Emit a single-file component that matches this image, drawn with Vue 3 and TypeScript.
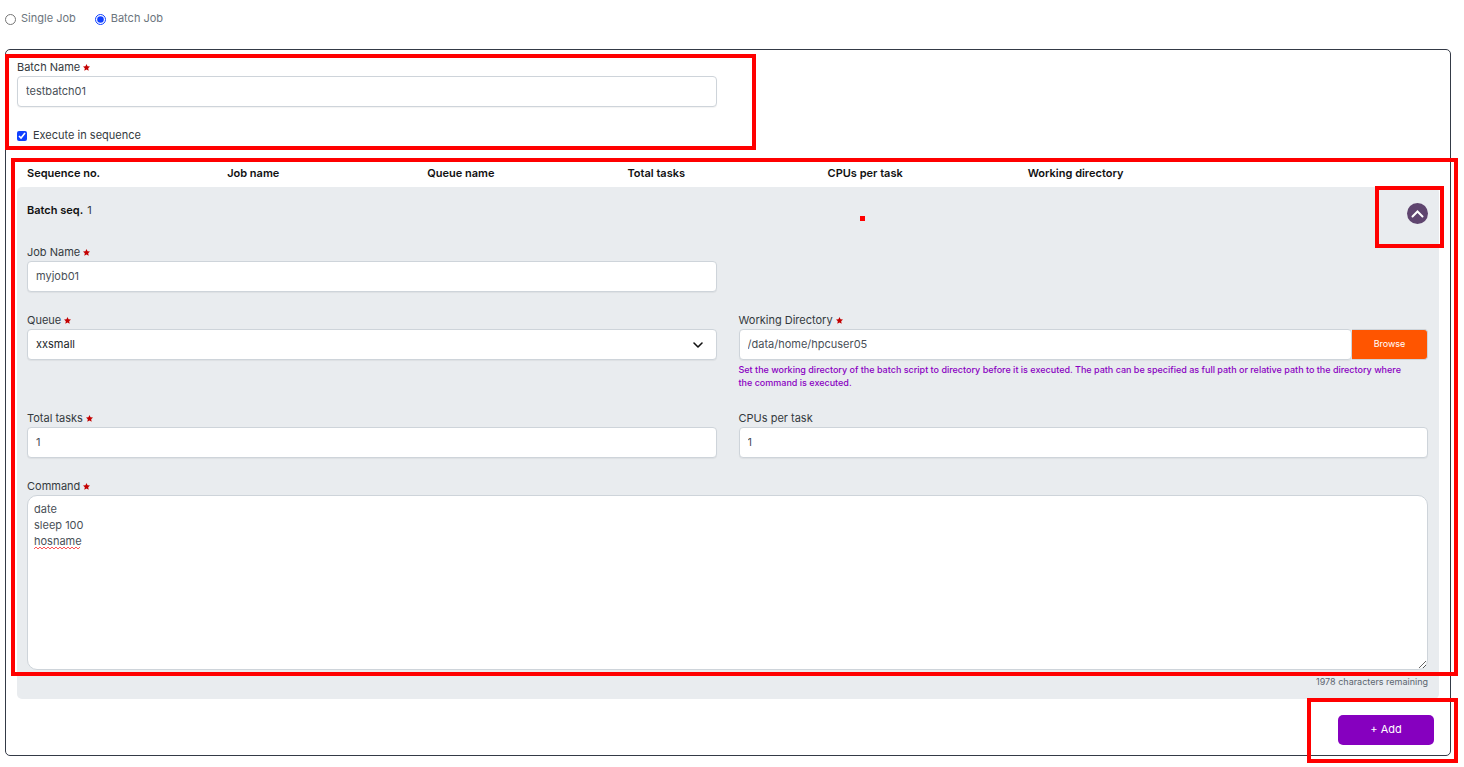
<script setup lang="ts">
import { computed, ref } from 'vue'

const mode = ref<'single' | 'batch'>('batch')
const batchName = ref('testbatch01')
const inSequence = ref(true)
const columns: string[] = ['Sequence no.', 'Job name', 'Queue name', 'Total tasks', 'CPUs per task', 'Working directory', '']
const queues: string[] = ['xxsmall', 'small', 'medium', 'large']

const jobName = ref('myjob01')
const queue = ref('xxsmall')
const directory = ref('/data/home/hpcuser05')
const totalTasks = ref('1')
const cpus = ref('1')
const command = ref('date\nsleep 100\nhosname')
const expanded = ref(true)

const limit = 2000
const remaining = computed(() => limit - command.value.length)
</script>

<template>
  <main class="page">
    <svg class="defs" aria-hidden="true">
      <symbol id="star" viewBox="0 0 10 10">
        <path d="M5 0l1.500 3.300 3.500.4-2.600 2.400.7 3.600L5 7.900 1.900 9.700l.7-3.600L0 3.700l3.500-.4z" />
      </symbol>
    </svg>

    <div class="modes">
      <label><input v-model="mode" type="radio" name="mode" value="single" />Single Job</label>
      <label><input v-model="mode" type="radio" name="mode" value="batch" />Batch Job</label>
    </div>

    <form class="card" @submit.prevent>
      <div class="columns">
        <div class="field">
          <label for="batch-name">Batch Name <svg class="star"><use href="#star" /></svg></label>
          <input id="batch-name" v-model="batchName" class="control" type="text" />
        </div>
      </div>
      <label class="check"><input v-model="inSequence" type="checkbox" />Execute in sequence</label>

      <div class="headings">
        <table>
          <thead>
            <tr><th v-for="c in columns" :key="c" scope="col">{{ c }}</th></tr>
          </thead>
        </table>
      </div>

      <section class="panel">
        <header class="panel-head">
          <p><b>Batch seq.</b>1</p>
          <button class="toggle" type="button" aria-label="Collapse" :aria-expanded="expanded" @click="expanded = !expanded">
            <svg viewBox="0 0 21 21"><path d="M5.500 13.500l5-5 5 5" /></svg>
          </button>
          <span class="mark mark-toggle"></span>
        </header>

        <div v-show="expanded">
          <div class="columns">
            <div class="field">
              <label for="job-name">Job Name <svg class="star"><use href="#star" /></svg></label>
              <input id="job-name" v-model="jobName" class="control" type="text" />
            </div>
          </div>
          <div class="columns">
            <div class="field">
              <label for="queue">Queue <svg class="star"><use href="#star" /></svg></label>
              <div class="select">
                <select id="queue" v-model="queue" class="control">
                  <option v-for="q in queues" :key="q">{{ q }}</option>
                </select>
                <svg class="chevron" viewBox="0 0 12 12"><path d="M2 4l4 4 4-4" /></svg>
              </div>
            </div>
            <div class="field">
              <label for="directory">Working Directory <svg class="star"><use href="#star" /></svg></label>
              <div class="group">
                <input id="directory" v-model="directory" class="control" type="text" />
                <button class="browse" type="button">Browse</button>
              </div>
              <p class="help">Set the working directory of the batch script to directory before it is executed. The path can be specified as full path or relative path to the directory where the command is executed.</p>
            </div>
          </div>
          <div class="columns">
            <div class="field">
              <label for="tasks">Total tasks <svg class="star"><use href="#star" /></svg></label>
              <input id="tasks" v-model="totalTasks" class="control" type="text" />
            </div>
            <div class="field">
              <label for="cpus">CPUs per task</label>
              <input id="cpus" v-model="cpus" class="control" type="text" />
            </div>
          </div>
          <div class="field command">
            <label for="command">Command <svg class="star"><use href="#star" /></svg></label>
            <textarea id="command" v-model="command" spellcheck="false"></textarea>
            <svg class="squiggle" viewBox="0 0 46 4"><path d="M0 3l2-2 2 2 2-2 2 2 2-2 2 2 2-2 2 2 2-2 2 2 2-2 2 2 2-2 2 2 2-2 2 2 2-2 2 2 2-2 2 2 2-2 2 2 2-2" /></svg>
          </div>
          <p class="counter">{{ remaining }} characters remaining</p>
        </div>
        <span class="mark mark-panel"></span>
        <span class="dot"></span>
      </section>

      <footer class="actions">
        <button class="add" type="button">+ Add</button>
        <span class="mark mark-add"></span>
      </footer>
      <span class="mark mark-batch"></span>
    </form>
  </main>
</template>

<style>
body {
  margin: 0;
  background: #fff;
}
</style>

<style scoped>
* {
  box-sizing: border-box;
}
.page {
  padding: 10px 13px 11px 5px;
  font: 11px/16px Inter, "Liberation Sans", sans-serif;
  color: #343a40;
}
input, select, textarea, button {
  font: inherit;
  margin: 0;
}
p {
  margin: 0;
}
.defs {
  position: absolute;
  width: 0;
  height: 0;
}
.modes {
  display: flex;
  gap: 19px;
  color: #6c757d;
}
.modes label,
.check {
  display: flex;
  align-items: center;
}
.modes input {
  width: 11px;
  height: 11px;
  margin: 2px 5px 0 0;
  accent-color: #1040ff;
}
.card {
  position: relative;
  margin-top: 23px;
  padding: 9px 11px 10px;
  border: 1px solid #343a46;
  border-radius: 5px;
}
.columns {
  display: grid;
  grid-template-columns: 1fr 1fr;
  column-gap: 22px;
}
.field {
  position: relative;
  margin-bottom: 20px;
}
.field > label {
  display: block;
  margin-bottom: 1px;
}
.star {
  width: 7px;
  height: 7px;
  fill: #c40000;
}
.control {
  display: block;
  width: 100%;
  height: 31px;
  padding: 0 8px 1px;
  border: 1px solid #ced4da;
  border-radius: 4px;
  background: #fff;
  color: #495057;
  outline: none;
  box-shadow: 0 1px 1px rgba(0, 0, 0, 0.05);
}
.check input {
  width: 10px;
  height: 10px;
  margin: 2px 6px 0 0;
  accent-color: #1040ff;
}
.headings {
  margin-top: 22px;
  padding: 0 11px 0 10px;
}
table {
  width: 100%;
  table-layout: fixed;
  border-collapse: collapse;
}
th {
  padding: 0 0 6px;
  text-align: left;
  font-weight: 600;
  color: #111;
}
.panel {
  position: relative;
  padding: 15px 11px 9px 10px;
  border-radius: 5px;
  background: #e9ecef;
}
.panel-head {
  position: relative;
  display: flex;
  justify-content: space-between;
  height: 42px;
}
.panel-head b {
  margin-right: 4px;
  font-weight: 600;
  color: #111;
}
.toggle {
  width: 21px;
  height: 21px;
  margin-top: 1px;
  padding: 0;
  border: 0;
  border-radius: 50%;
  background: #5f456f;
}
.toggle svg {
  display: block;
  fill: none;
  stroke: #fff;
  stroke-width: 2;
  stroke-linecap: round;
}
.select {
  position: relative;
}
.select .control {
  appearance: none;
  color: #212529;
}
.chevron {
  position: absolute;
  top: 10px;
  right: 13px;
  width: 12px;
  height: 12px;
  fill: none;
  stroke: #111;
  stroke-width: 1.6;
  stroke-linecap: round;
  stroke-linejoin: round;
  pointer-events: none;
}
.group {
  display: flex;
}
.group .control {
  flex: 1;
}
.browse {
  width: 76px;
  padding: 0 0 1px;
  border: 1px solid #ced4da;
  border-left: 0;
  border-radius: 0 4px 4px 0;
  background: #ff5500;
  color: #fff;
  font-size: 9px;
}
.help {
  margin-top: 3px;
  padding: 0 16px 1px 0;
  font-size: 9px;
  font-weight: 500;
  line-height: 13px;
  color: #8a00c2;
}
.command {
  margin-bottom: 0;
}
textarea {
  display: block;
  width: 100%;
  height: 175px;
  padding: 5px 6px;
  border: 1px solid #ced4da;
  border-radius: 10px;
  background: #fff;
  color: #495057;
  outline: none;
  resize: vertical;
}
.squiggle {
  position: absolute;
  left: 7px;
  top: 68px;
  width: 46px;
  height: 4px;
  fill: none;
  stroke: #f55;
}
.counter {
  margin-top: 4px;
  font-size: 9px;
  text-align: right;
  color: #5c6670;
}
.actions {
  position: relative;
  display: flex;
  justify-content: flex-end;
  padding: 16px 5px 0;
}
.add {
  width: 96px;
  height: 30px;
  padding: 0 0 2px;
  border: 0;
  border-radius: 5px;
  background: #8600bf;
  color: #fff;
}
.mark {
  position: absolute;
  border: 4px solid #f00;
  pointer-events: none;
}
.mark-batch {
  left: -1px;
  top: 4px;
  width: 751px;
  height: 96px;
}
.mark-panel {
  inset: -29px -19px 23px -6px;
}
.mark-toggle {
  top: -16px;
  right: -16px;
  width: 69px;
  height: 62px;
}
.mark-add {
  top: -1px;
  right: -19px;
  bottom: -18px;
  width: 151px;
}
.dot {
  position: absolute;
  left: 843px;
  top: 29px;
  width: 5px;
  height: 5px;
  background: #f00;
}
</style>
